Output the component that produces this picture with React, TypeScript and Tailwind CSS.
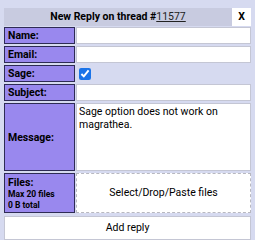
export default function App() {
  const font = { fontFamily: "Roboto, 'Liberation Sans', sans-serif" };
  const label =
    "w-[71px] shrink-0 border border-[#2e2b55] bg-[#9988ee] pl-[3px] text-[10.5px] font-bold text-black leading-[13px] flex items-center";
  const input = "flex-1 border border-[#c4c6d4] bg-white";
  return (
    <div className="h-[240px] w-[255px] bg-[#d6daf0] pt-[8px] px-[4px]" style={font}>
      <div className="flex h-[18px]">
        <div className="flex flex-1 items-center justify-center bg-[#c8cbe0] text-[10.5px] text-black">
          <span className="font-bold">New Reply on thread #</span>
          <span className="underline text-[#222]">11577</span>
        </div>
        <button className="w-[19px] bg-white text-[10.5px] font-bold leading-none">X</button>
      </div>
      <div className="mt-[1px] flex flex-col gap-[2px]">
        <div className="flex h-[17px] gap-[1px]">
          <div className={label}>Name:</div>
          <div className={input} />
        </div>
        <div className="flex h-[17px] gap-[1px]">
          <div className={label}>Email:</div>
          <div className={input} />
        </div>
        <div className="flex h-[17px] gap-[1px]">
          <div className={label}>Sage:</div>
          <div className="flex flex-1 items-center pl-[3px]">
            <input type="checkbox" defaultChecked className="m-0 h-[12px] w-[12px] accent-[#1a73e8]" />
          </div>
        </div>
        <div className="flex h-[17px] gap-[1px]">
          <div className={label}>Subject:</div>
          <div className={input} />
        </div>
        <div className="flex h-[68px] gap-[1px]">
          <div className={label}>Message:</div>
          <div className="flex-1 border border-[#c4c6d4] bg-white px-[2px] pt-[2px] text-[10.5px] leading-[12.5px] text-black">
            Sage option does not work on magrathea.
          </div>
        </div>
        <div className="flex h-[40px] gap-[1px]">
          <div className={label + " flex-col items-start justify-center"}>
            <span>Files:</span>
            <span className="text-[8.5px] leading-[11px]">Max 20 files</span>
            <span className="text-[8.5px] leading-[11px]">0 B total</span>
          </div>
          <div className="flex flex-1 items-center justify-center border border-dashed border-[#b8b8c0] bg-white text-[10.5px] text-black">
            Select/Drop/Paste files
          </div>
        </div>
        <button className="mt-[1px] h-[24px] border border-[#c4c6d4] bg-white text-[10.5px] text-black">
          Add reply
        </button>
      </div>
    </div>
  );
}
